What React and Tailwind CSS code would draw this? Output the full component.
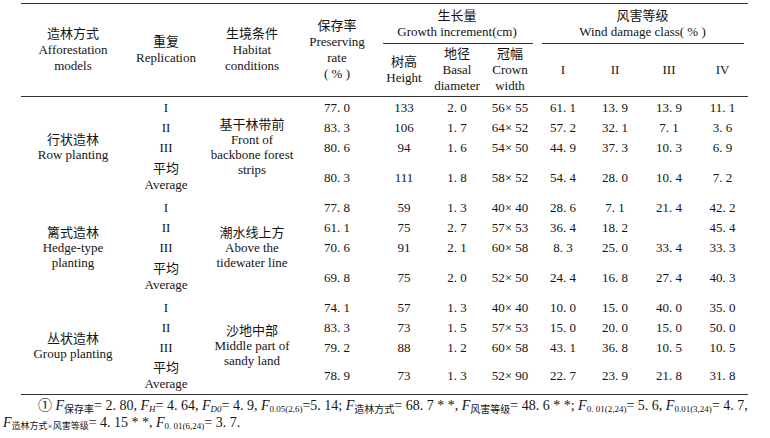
import React from "react";

const COLS =
  "grid grid-cols-[104px_82px_90px_80px_54px_52px_54px_52px_52px_56px_51px]";

const blocks = [
  {
    label: ["行状造林", "Row planting"],
    habitat: ["基干林带前", "Front of", "backbone forest", "strips"],
    rows: [
      ["77. 0", "133", "2. 0", "56× 55", "61. 1", "13. 9", "13. 9", "11. 1"],
      ["83. 3", "106", "1. 7", "64× 52", "57. 2", "32. 1", "7. 1", "3. 6"],
      ["80. 6", "94", "1. 6", "54× 50", "44. 9", "37. 3", "10. 3", "6. 9"],
      ["80. 3", "111", "1. 8", "58× 52", "54. 4", "28. 0", "10. 4", "7. 2"],
    ],
  },
  {
    label: ["篱式造林", "Hedge-type", "planting"],
    habitat: ["潮水线上方", "Above the", "tidewater line"],
    rows: [
      ["77. 8", "59", "1. 3", "40× 40", "28. 6", "7. 1", "21. 4", "42. 2"],
      ["61. 1", "75", "2. 7", "57× 53", "36. 4", "18. 2", "", "45. 4"],
      ["70. 6", "91", "2. 1", "60× 58", "8. 3", "25. 0", "33. 4", "33. 3"],
      ["69. 8", "75", "2. 0", "52× 50", "24. 4", "16. 8", "27. 4", "40. 3"],
    ],
  },
  {
    label: ["丛状造林", "Group planting"],
    habitat: ["沙地中部", "Middle part of", "sandy land"],
    rows: [
      ["74. 1", "57", "1. 3", "40× 40", "10. 0", "15. 0", "40. 0", "35. 0"],
      ["83. 3", "73", "1. 5", "57× 53", "15. 0", "20. 0", "15. 0", "50. 0"],
      ["79. 2", "88", "1. 2", "60× 58", "43. 1", "36. 8", "10. 5", "10. 5"],
      ["78. 9", "73", "1. 3", "52× 90", "22. 7", "23. 9", "21. 8", "31. 8"],
    ],
  },
];

const reps = ["I", "II", "III"];

function Lines({ lines, className = "" }) {
  return (
    <div className={"flex flex-col items-center justify-center text-center " + className}>
      {lines.map((l, i) => (
        <span key={i} className="whitespace-nowrap">
          {l}
        </span>
      ))}
    </div>
  );
}

function F({ sub, italicSub = false, big = false }) {
  return (
    <>
      <i>F</i>
      <sub className={(big ? "text-[10px] " : "text-[9px] ") + (italicSub ? "italic" : "not-italic")}>{sub}</sub>
    </>
  );
}

export default function App() {
  return (
    <div className="w-[770px] h-[438px] overflow-hidden bg-white text-[#141414] font-['Liberation_Serif','Noto_Sans_CJK_SC',serif] text-[13px]">
      <div className="pt-[3px]">
        <div className="ml-[21px] w-[727px]">
          {/* header */}
          <div className={COLS + " grid-rows-[40px_52px] border-t border-b border-[#333] leading-4"}>
            <Lines className="row-span-2" lines={["造林方式", "Afforestation", "models"]} />
            <Lines className="row-span-2" lines={["重复", "Replication"]} />
            <Lines className="row-span-2" lines={["生境条件", "Habitat", "conditions"]} />
            <Lines className="row-span-2" lines={["保存率", "Preserving", "rate", "( % )"]} />
            <div className="col-span-3 flex flex-col">
              <Lines className="flex-1 pt-px" lines={["生长量", "Growth increment(cm)"]} />
              <div className="h-px bg-[#333] ml-[6px] mr-[4px]" />
            </div>
            <div className="col-span-4 flex flex-col">
              <Lines className="flex-1 pt-px" lines={["风害等级", "Wind damage class( % )"]} />
              <div className="h-px bg-[#333] ml-[5px] mr-[4px]" />
            </div>
            <Lines lines={["树高", "Height"]} />
            <Lines lines={["地径", "Basal", "diameter"]} />
            <Lines lines={["冠幅", "Crown", "width"]} />
            <Lines lines={["I"]} />
            <Lines lines={["II"]} />
            <Lines lines={["III"]} />
            <Lines lines={["IV"]} />
          </div>
          {/* body */}
          <div
            className={
              COLS +
              " grid-rows-[20px_20px_20px_40px_20px_20px_20px_40px_20px_20px_20px_37px] border-b border-[#333] leading-[15px]"
            }
          >
            {blocks.map((b, bi) =>
              b.rows.map((r, ri) => (
                <React.Fragment key={bi + "-" + ri}>
                  {ri === 0 && <Lines className="row-span-4" lines={b.label} />}
                  {ri < 3 ? (
                    <Lines lines={[reps[ri]]} />
                  ) : (
                    <Lines className="leading-4" lines={["平均", "Average"]} />
                  )}
                  {ri === 0 && <Lines className="row-span-4" lines={b.habitat} />}
                  {r.map((v, vi) => (
                    <div key={vi} className="flex items-center justify-center whitespace-pre">
                      {v}
                    </div>
                  ))}
                </React.Fragment>
              ))
            )}
          </div>
        </div>
        {/* footnote */}
        <div className="pt-[2px] leading-[17px] text-[14px]">
          <div className="pl-[38px] whitespace-nowrap">
            ① <F sub="保存率" big />= 2. 80, <F sub="H" italicSub />= 4. 64, <F sub="D0" italicSub />= 4. 9,{" "}
            <F sub="0.05(2,6)" />=5. 14; <F sub="造林方式" big />= 68. 7 * *, <F sub="风害等级" big />= 48. 6 * *;{" "}
            <F sub="0. 01(2,24)" />= 5. 6, <F sub="0.01(3,24)" />= 4. 7,
          </div>
          <div className="pl-[3px] whitespace-nowrap">
            <F sub="造林方式×风害等级" />= 4. 15 * *, <F sub="0. 01(6,24)" />= 3. 7.
          </div>
        </div>
      </div>
    </div>
  );
}
